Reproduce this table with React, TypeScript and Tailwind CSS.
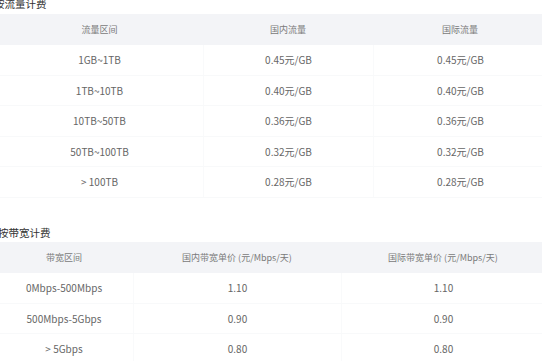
const font = { fontFamily: '"Noto Sans CJK SC", "Noto Sans", sans-serif' };

const trafficRows = [
  ['1GB~1TB', '0.45元/GB', '0.45元/GB'],
  ['1TB~10TB', '0.40元/GB', '0.40元/GB'],
  ['10TB~50TB', '0.36元/GB', '0.36元/GB'],
  ['50TB~100TB', '0.32元/GB', '0.32元/GB'],
  ['> 100TB', '0.28元/GB', '0.28元/GB'],
];

const bandwidthRows = [
  ['0Mbps-500Mbps', '1.10', '1.10'],
  ['500Mbps-5Gbps', '0.90', '0.90'],
  ['> 5Gbps', '0.80', '0.80'],
];

function PriceTable({
  head,
  rows,
  cols,
}: {
  head: string[];
  rows: string[][];
  cols: string;
}) {
  return (
    <div>
      <div className={`grid ${cols} h-[31px] bg-[#f3f4f7] items-center text-[9px] text-[#7a7a7a]`}>
        {head.map((h) => (
          <div key={h} className="text-center">
            {h}
          </div>
        ))}
      </div>
      {rows.map((r, i) => (
        <div
          key={i}
          className={`grid ${cols} h-[30.5px] border-b border-[#f8f9fa] text-[10px] text-[#666]`}
        >
          {r.map((c, j) => (
            <div
              key={j}
              className={`flex items-center justify-center ${j > 0 ? 'border-l border-[#f9fafb]' : ''}`}
            >
              {c}
            </div>
          ))}
        </div>
      ))}
    </div>
  );
}

export default function App() {
  return (
    <div className="w-[542px] h-[361px] overflow-hidden bg-white" style={font}>
      <div className="-mt-[3px]">
        {/* 按流量计费 */}
        <h3 className="-ml-[6px] h-[14px] leading-[14px] text-[10.5px] text-[#333] mb-[3px]">按流量计费</h3>
        <div className="-ml-[4px] w-[551px]">
          <PriceTable
            head={['流量区间', '国内流量', '国际流量']}
            rows={trafficRows}
            cols="grid-cols-[207px_170px_174px]"
          />
        </div>

        {/* 按带宽计费 */}
        <h3 className="-ml-[2px] mt-[28.5px] h-[14px] leading-[14px] text-[10.5px] text-[#333] mb-[2px]">按带宽计费</h3>
        <div className="-ml-[5px] w-[550px]">
          <PriceTable
            head={['带宽区间', '国内带宽单价 (元/Mbps/天)', '国际带宽单价 (元/Mbps/天)']}
            rows={bandwidthRows}
            cols="grid-cols-[138px_208px_204px]"
          />
        </div>
      </div>
    </div>
  );
}
